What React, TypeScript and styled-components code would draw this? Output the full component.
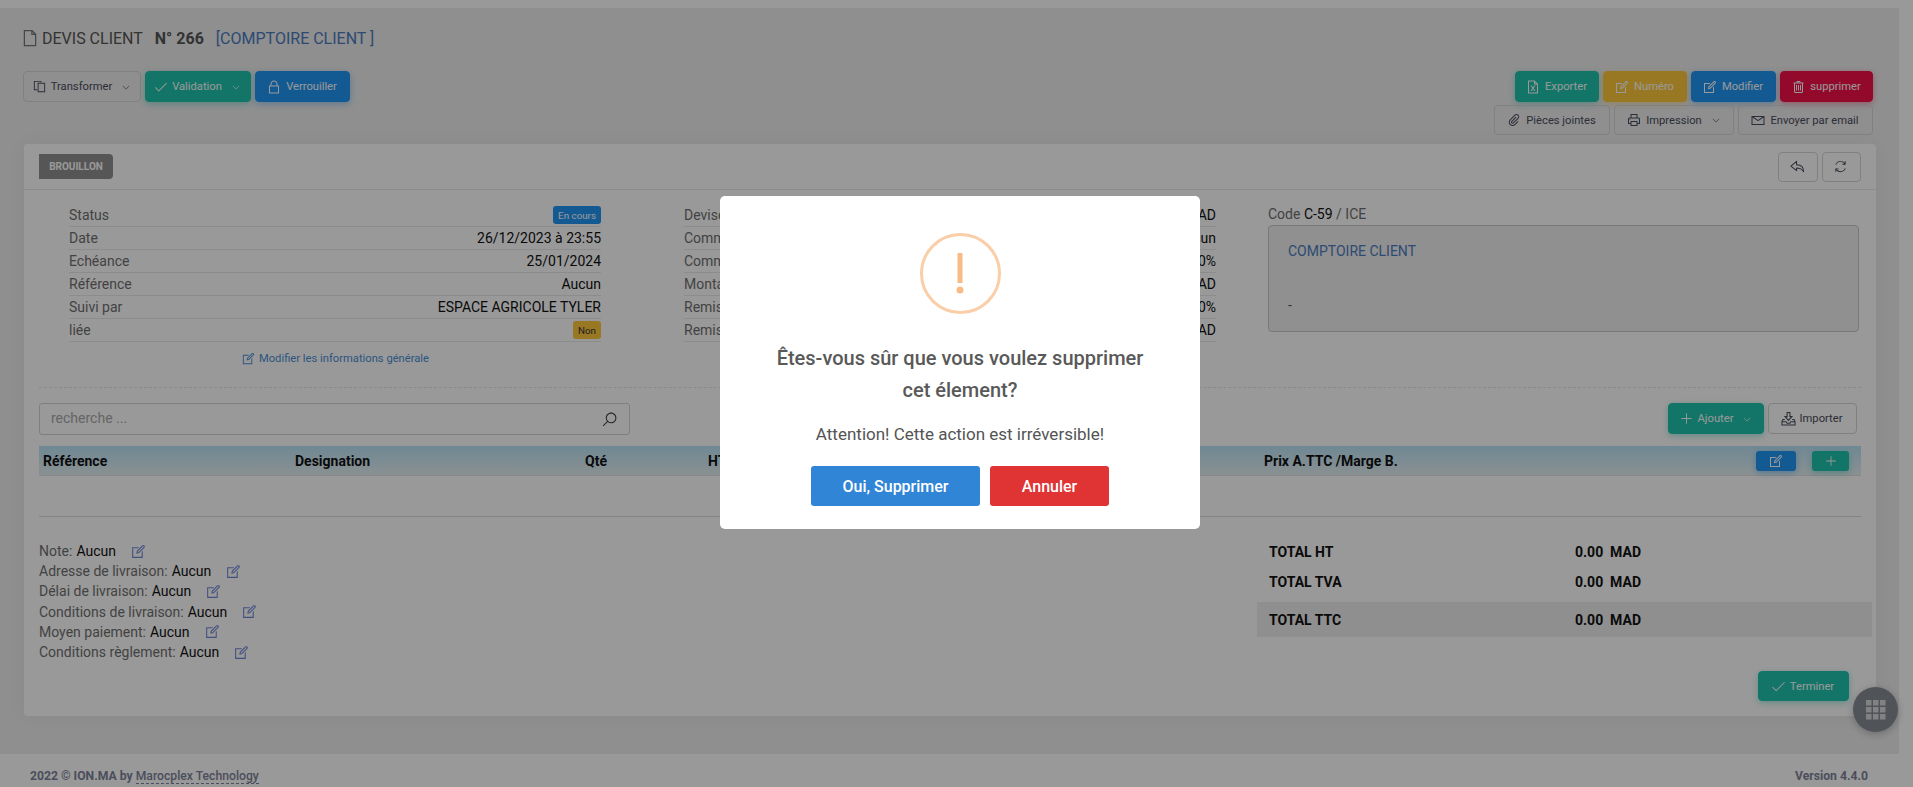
import React from "react";
import styled, { createGlobalStyle } from "styled-components";
import {
    LiaFile,
    LiaCopy,
    LiaCheckSolid,
    LiaLockSolid,
    LiaAngleDownSolid,
    LiaFileExcel,
    LiaEdit,
    LiaTrashAlt,
    LiaPaperclipSolid,
    LiaPrintSolid,
    LiaEnvelope,
    LiaSyncSolid,
    LiaSearchSolid,
    LiaPlusSolid,
} from "react-icons/lia";

const teal = "#1fc4ad";
const blue = "#2196f3";
const amber = "#ffc83d";
const red = "#f5104a";

const infoLeft = [
    { label: "Date", value: "26/12/2023 à 23:55" },
    { label: "Echéance", value: "25/01/2024" },
    { label: "Référence", value: "Aucun" },
    { label: "Suivi par", value: "ESPACE AGRICOLE TYLER" },
];

const infoMiddle = [
    { label: "Devise", value: "MAD" },
    { label: "Commercial", value: "Aucun" },
    { label: "Commission", value: "0%" },
    { label: "Montant", value: "0.00 MAD" },
    { label: "Remise", value: "0%" },
    { label: "Remise", value: "0.00 MAD" },
];

const notes = [
    "Note:",
    "Adresse de livraison:",
    "Délai de livraison:",
    "Conditions de livraison:",
    "Moyen paiement:",
    "Conditions règlement:",
];

function ImportIcon() {
    return (
        <svg width="15" height="15" viewBox="0 0 16 16" fill="none" stroke="currentColor" strokeWidth="1.1">
            <path d="M6.5 1.5h3v4.5h2.2L8 10 4.3 6h2.2z" />
            <path d="M4 9H2l-1 2.5V15h14v-3.5L14 9h-2" />
            <path d="M1 11.5h4.5l1 1.5h3l1-1.5H15" />
        </svg>
    );
}

function ReplyIcon() {
    return (
        <svg width="15" height="15" viewBox="0 0 16 16" fill="none" stroke="currentColor" strokeWidth="1.1">
            <path d="M7 2.5 1 7.5l6 5V9.7c3.4 0 5.6.8 7.5 3.8 0-4.6-2.9-7.3-7.5-7.3z" strokeLinejoin="round" />
        </svg>
    );
}

export default function App() {
    return (
        <>
            <GlobalStyle />
            <TopStrip />
            <Shell>
                <Main>
                    <TitleRow>
                        <LiaFile size={20} />
                        <span>DEVIS CLIENT</span>
                        <TitleNumber>N° 266</TitleNumber>
                        <TitleClient>[COMPTOIRE CLIENT ]</TitleClient>
                    </TitleRow>

                    <ActionBar>
                        <ButtonGroup>
                            <Button width={118}>
                                <LiaCopy size={15} /> Transformer <Caret />
                            </Button>
                            <Button color={teal} width={106}>
                                <LiaCheckSolid size={14} /> Validation <Caret />
                            </Button>
                            <Button color={blue} width={95}>
                                <LiaLockSolid size={16} /> Verrouiller
                            </Button>
                        </ButtonGroup>
                        <RightActions>
                            <ButtonGroup>
                                <Button color={teal} width={84}>
                                    <LiaFileExcel size={16} /> Exporter
                                </Button>
                                <Button color={amber} width={84}>
                                    <LiaEdit size={16} /> Numéro
                                </Button>
                                <Button color={blue} width={85}>
                                    <LiaEdit size={16} /> Modifier
                                </Button>
                                <Button color={red} width={93}>
                                    <LiaTrashAlt size={16} /> supprimer
                                </Button>
                            </ButtonGroup>
                            <ButtonGroup>
                                <Button width={116} height={30}>
                                    <LiaPaperclipSolid size={16} /> Pièces jointes
                                </Button>
                                <Button width={120} height={30}>
                                    <LiaPrintSolid size={16} /> Impression <Caret />
                                </Button>
                                <Button width={135} height={30}>
                                    <LiaEnvelope size={16} /> Envoyer par email
                                </Button>
                            </ButtonGroup>
                        </RightActions>
                    </ActionBar>

                    <Card>
                        <CardHeader>
                            <DraftBadge>BROUILLON</DraftBadge>
                            <ButtonGroup>
                                <Button width={40} height={30}>
                                    <ReplyIcon />
                                </Button>
                                <Button width={39} height={30}>
                                    <LiaSyncSolid size={15} />
                                </Button>
                            </ButtonGroup>
                        </CardHeader>

                        <CardBody>
                            <InfoGrid>
                                <LeftColumn>
                                    <InfoRow>
                                        <InfoLabel>Status</InfoLabel>
                                        <Pill color={blue}>En cours</Pill>
                                    </InfoRow>
                                    {infoLeft.map((row) => (
                                        <InfoRow key={row.label}>
                                            <InfoLabel>{row.label}</InfoLabel>
                                            <span>{row.value}</span>
                                        </InfoRow>
                                    ))}
                                    <InfoRow>
                                        <InfoLabel>liée</InfoLabel>
                                        <Pill color={amber} dark>
                                            Non
                                        </Pill>
                                    </InfoRow>
                                    <EditInfo>
                                        <LiaEdit size={15} /> Modifier les informations générale
                                    </EditInfo>
                                </LeftColumn>
                                <MiddleColumn>
                                    {infoMiddle.map((row, i) => (
                                        <InfoRow key={i}>
                                            <InfoLabel>{row.label}</InfoLabel>
                                            <span>{row.value}</span>
                                        </InfoRow>
                                    ))}
                                </MiddleColumn>
                                <div>
                                    <ClientCode>
                                        Code <b>C-59</b> / ICE
                                    </ClientCode>
                                    <ClientBox>
                                        <ClientName>COMPTOIRE CLIENT</ClientName>
                                        <ClientDash>-</ClientDash>
                                    </ClientBox>
                                </div>
                            </InfoGrid>

                            <DashedLine />

                            <SearchRow>
                                <SearchBox>
                                    <SearchPlaceholder>recherche ...</SearchPlaceholder>
                                    <LiaSearchSolid size={17} />
                                </SearchBox>
                                <ButtonGroup>
                                    <Button color={teal} width={96}>
                                        <LiaPlusSolid size={15} /> Ajouter <Caret />
                                    </Button>
                                    <Button width={89}>
                                        <ImportIcon /> Importer
                                    </Button>
                                </ButtonGroup>
                            </SearchRow>

                            <TableHead>
                                <HeadCell width={252}>Référence</HeadCell>
                                <HeadCell width={290}>Designation</HeadCell>
                                <HeadCell width={123}>Qté</HeadCell>
                                <HeadCell width={556}>HT</HeadCell>
                                <HeadCell width={492}>Prix A.TTC /Marge B.</HeadCell>
                                <HeadActions>
                                    <SmallButton color={blue} width={40}>
                                        <LiaEdit size={16} />
                                    </SmallButton>
                                    <SmallButton color={teal} width={37}>
                                        <LiaPlusSolid size={14} />
                                    </SmallButton>
                                </HeadActions>
                            </TableHead>

                            <TableEnd />

                            <Summary>
                                <NoteList>
                                    {notes.map((note) => (
                                        <NoteRow key={note}>
                                            <InfoLabel>{note}</InfoLabel> <span>Aucun</span>
                                            <LiaEdit size={17} />
                                        </NoteRow>
                                    ))}
                                </NoteList>
                                <Totals>
                                    <TotalRow>
                                        <TotalLabel>TOTAL HT</TotalLabel>
                                        <span>0.00&nbsp; MAD</span>
                                    </TotalRow>
                                    <TotalRow>
                                        <TotalLabel>TOTAL TVA</TotalLabel>
                                        <span>0.00&nbsp; MAD</span>
                                    </TotalRow>
                                    <TotalRow highlight>
                                        <TotalLabel>TOTAL TTC</TotalLabel>
                                        <span>0.00&nbsp; MAD</span>
                                    </TotalRow>
                                </Totals>
                            </Summary>

                            <CardFooter>
                                <Button color={teal} width={91} height={30}>
                                    <LiaCheckSolid size={15} /> Terminer
                                </Button>
                            </CardFooter>
                        </CardBody>
                    </Card>
                </Main>
                <Scrollbar />
            </Shell>

            <Footer>
                <span>
                    2022 © ION.MA by <FooterLink>Marocplex Technology</FooterLink>
                </span>
                <span>Version 4.4.0</span>
            </Footer>

            <FloatingButton>
                <svg width="20" height="20" viewBox="0 0 20 20" fill="currentColor">
                    {[0, 7, 14].map((y) =>
                        [0, 7, 14].map((x) => <rect key={x + "-" + y} x={x} y={y} width="5.5" height="5.5" />)
                    )}
                </svg>
            </FloatingButton>

            <Backdrop>
                <Modal>
                    <WarningIcon>
                        <svg width="14" height="42" viewBox="0 0 14 42" fill="currentColor">
                            <rect x="4.5" y="0" width="5" height="30" />
                            <circle cx="7" cy="37" r="3.5" />
                        </svg>
                    </WarningIcon>
                    <ModalTitle>Êtes-vous sûr que vous voulez supprimer cet élement?</ModalTitle>
                    <ModalText>Attention! Cette action est irréversible!</ModalText>
                    <ModalActions>
                        <ModalButton color="#3085d6" width={169}>
                            Oui, Supprimer
                        </ModalButton>
                        <ModalButton color="#e03333" width={119}>
                            Annuler
                        </ModalButton>
                    </ModalActions>
                </Modal>
            </Backdrop>
        </>
    );
}

const GlobalStyle = createGlobalStyle`
    html, body {
        margin: 0;
        height: 100%;
        overflow: hidden;
        background: #fff;
    }
    body {
        font-family: Roboto, "Liberation Sans", sans-serif;
        font-size: 13px;
        color: #3f4254;
    }
    * {
        box-sizing: border-box;
    }
`;

const TopStrip = styled.div`
    height: 8px;
    background: #fff;
`;

const Shell = styled.div`
    display: flex;
    height: 746px;
`;

const Main = styled.div`
    width: 1899px;
    padding: 0 23px 0 24px;
    background: #eeeeee;
`;

const Scrollbar = styled.div`
    flex: 1;
    background: #fff;
`;

const TitleRow = styled.div`
    display: flex;
    align-items: center;
    height: 46px;
    margin-left: -3px;
    padding-top: 14px;
    font-size: 16px;
    color: #555;

    span + span {
        margin-left: 12px;
    }

    svg {
        margin: 0 2px 0 -1px;
        color: #777;
    }
`;

const TitleNumber = styled.span`
    font-weight: 700;
`;

const TitleClient = styled.span`
    color: #4b7cc0;
`;

const ActionBar = styled.div`
    display: flex;
    justify-content: space-between;
    margin: 17px 3px 9px -1px;
`;

const ButtonGroup = styled.div`
    display: flex;
    gap: 4px;
`;

const RightActions = styled.div`
    display: flex;
    flex-direction: column;
    align-items: flex-end;
    gap: 3px;
`;

const Button = styled.button<{ color?: string; width?: number; height?: number }>`
    display: inline-flex;
    align-items: center;
    justify-content: center;
    gap: 4px;
    width: ${(p) => (p.width ? p.width + "px" : "auto")};
    height: ${(p) => p.height ?? 31}px;
    padding: 0 6px 0 4px;
    border: 1px solid ${(p) => p.color ?? "#d6d6d6"};
    border-radius: 4px;
    background: ${(p) => p.color ?? "transparent"};
    box-shadow: ${(p) => (p.color ? `0 2px 6px ${p.color}66` : "none")};
    color: ${(p) => (p.color ? "#fff" : "#4a4d5c")};
    font: 400 11.2px Roboto, sans-serif;
    white-space: nowrap;

    svg {
        flex: none;
    }
`;

const Caret = styled(LiaAngleDownSolid).attrs({ size: 8 })`
    margin-left: 6px;
`;

const Card = styled.div`
    height: 572px;
    border-radius: 4px;
    background: #fff;
    box-shadow: 0 0 20px rgba(0, 0, 0, 0.04);
`;

const CardHeader = styled.div`
    display: flex;
    align-items: center;
    justify-content: space-between;
    height: 46px;
    padding: 0 15px;
    border-bottom: 1px solid #eaeaea;
`;

const DraftBadge = styled.div`
    display: flex;
    align-items: center;
    justify-content: center;
    width: 74px;
    height: 25px;
    border-radius: 0 4px 4px 0;
    background: #8f8f8f;
    color: #fff;
    font-size: 10px;
    font-weight: 700;
`;

const CardBody = styled.div`
    padding: 0 15px;
`;

const InfoGrid = styled.div`
    display: grid;
    grid-template-columns: 562px 563px 591px;
    column-gap: 52px;
    height: 197px;
    padding-top: 14px;
`;

const LeftColumn = styled.div`
    padding-left: 30px;
`;

const MiddleColumn = styled.div`
    padding-left: 31px;
`;

const InfoRow = styled.div`
    display: flex;
    align-items: center;
    justify-content: space-between;
    height: 23px;
    border-bottom: 1px solid #eaeaea;
    font-size: 14px;
    color: #111;
`;

const InfoLabel = styled.span`
    color: #6f6f6f;
`;

const Pill = styled.span<{ color: string; dark?: boolean }>`
    display: inline-flex;
    align-items: center;
    height: 18px;
    padding: 0 5px;
    border-radius: 3px;
    background: ${(p) => p.color};
    color: ${(p) => (p.dark ? "#333" : "#fff")};
    font-size: 9.8px;
`;

const EditInfo = styled.div`
    display: flex;
    align-items: center;
    justify-content: center;
    gap: 3px;
    margin-top: 6px;
    height: 20px;
    color: #4b8fd6;
    font-size: 11.2px;
`;

const ClientCode = styled.div`
    height: 21px;
    font-size: 14px;
    line-height: 20px;
    color: #6f6f6f;

    b {
        font-weight: 400;
        color: #111;
    }
`;

const ClientBox = styled.div`
    height: 107px;
    padding: 17px 19px;
    border: 1px solid #c9c9c9;
    border-radius: 4px;
    background: #f0f0f0;
`;

const ClientName = styled.div`
    font-size: 14px;
    color: #4b7cc0;
`;

const ClientDash = styled.div`
    margin-top: 38px;
    font-size: 14px;
    color: #555;
`;

const DashedLine = styled.div`
    border-top: 1px dashed #e4e4e4;
`;

const SearchRow = styled.div`
    display: flex;
    justify-content: space-between;
    align-items: flex-start;
    padding: 15px 4px 0 0;
    height: 58px;
`;

const SearchBox = styled.div`
    display: flex;
    align-items: center;
    justify-content: space-between;
    width: 591px;
    height: 32px;
    padding: 0 11px;
    border: 1px solid #d4d4d4;
    border-radius: 3px;
    color: #444;
`;

const SearchPlaceholder = styled.span`
    margin-top: -2px;
    color: #a8a8a8;
    font-size: 14px;
`;

const TableHead = styled.div`
    display: flex;
    align-items: center;
    height: 30px;
    padding-left: 4px;
    background: linear-gradient(#b9e4f7, #e6f0f3);
    border-bottom: 1px solid #e2e2e2;
    color: #111;
    font-size: 14px;
    font-weight: 700;
`;

const HeadCell = styled.div<{ width: number }>`
    flex: none;
    width: ${(p) => p.width}px;
`;

const HeadActions = styled.div`
    display: flex;
    gap: 16px;
`;

const SmallButton = styled.div<{ color: string; width: number }>`
    display: flex;
    align-items: center;
    justify-content: center;
    width: ${(p) => p.width}px;
    height: 20px;
    border-radius: 3px;
    background: ${(p) => p.color};
    box-shadow: 0 2px 6px ${(p) => p.color}66;
    color: #fff;
`;

const TableEnd = styled.div`
    height: 41px;
    border-bottom: 1px solid #dcdcdc;
`;

const Summary = styled.div`
    display: flex;
    justify-content: space-between;
    padding-top: 24px;
    margin-right: -11px;
`;

const NoteList = styled.div`
    display: flex;
    flex-direction: column;
`;

const NoteRow = styled.div`
    display: flex;
    align-items: center;
    gap: 4px;
    height: 20.2px;
    font-size: 14px;
    color: #111;

    svg {
        margin-left: 10px;
        color: #6f86d6;
    }
`;

const Totals = styled.div`
    display: flex;
    flex-direction: column;
    width: 615px;
    margin-top: -4px;
`;

const TotalRow = styled.div<{ highlight?: boolean }>`
    display: flex;
    align-items: center;
    height: ${(p) => (p.highlight ? 35 : 30)}px;
    margin-top: ${(p) => (p.highlight ? 5 : 0)}px;
    padding-left: 12px;
    background: ${(p) => (p.highlight ? "#eeeeee" : "transparent")};
    color: #111;
    font-size: 14px;
    font-weight: 700;
`;

const TotalLabel = styled.span`
    width: 306px;
`;

const CardFooter = styled.div`
    display: flex;
    justify-content: flex-end;
    margin-top: 9px;
    padding-right: 12px;
`;

const Footer = styled.div`
    display: flex;
    justify-content: space-between;
    height: 33px;
    padding: 14px 45px 0 30px;
    background: #fff;
    font-size: 12.2px;
    font-weight: 700;
    color: #7e8299;
    line-height: 16px;
`;

const FooterLink = styled.span`
    border-bottom: 1px dashed #7e8299;
    font-weight: 500;
`;

const FloatingButton = styled.div`
    position: fixed;
    left: 1853px;
    top: 687px;
    display: flex;
    align-items: center;
    justify-content: center;
    width: 45px;
    height: 45px;
    border-radius: 50%;
    background: #868c94;
    box-shadow: 0 2px 8px rgba(0, 0, 0, 0.25);
    color: #d9d9d9;
`;

const Backdrop = styled.div`
    position: fixed;
    inset: 0;
    display: flex;
    justify-content: center;
    background: rgba(0, 0, 0, 0.4);
    padding: 196px 0 0 7px;
`;

const Modal = styled.div`
    display: flex;
    flex-direction: column;
    align-items: center;
    width: 480px;
    height: 333px;
    padding-top: 37px;
    border-radius: 5px;
    background: #fff;
`;

const WarningIcon = styled.div`
    display: flex;
    align-items: center;
    justify-content: center;
    width: 81px;
    height: 81px;
    border: 3px solid #facea8;
    border-radius: 50%;
    color: #f8bb86;
`;

const ModalTitle = styled.h2`
    width: 380px;
    margin: 28px 0 0;
    color: #595959;
    font-size: 20px;
    font-weight: 500;
    line-height: 32px;
    text-align: center;
`;

const ModalText = styled.div`
    margin-top: 18px;
    color: #545454;
    font-size: 17px;
    line-height: 20px;
`;

const ModalActions = styled.div`
    display: flex;
    gap: 10px;
    margin-top: 22px;
`;

const ModalButton = styled.button<{ color: string; width: number }>`
    width: ${(p) => p.width}px;
    height: 40px;
    border: 0;
    border-radius: 3px;
    background: ${(p) => p.color};
    color: #fff;
    font: 500 16px Roboto, sans-serif;
`;
